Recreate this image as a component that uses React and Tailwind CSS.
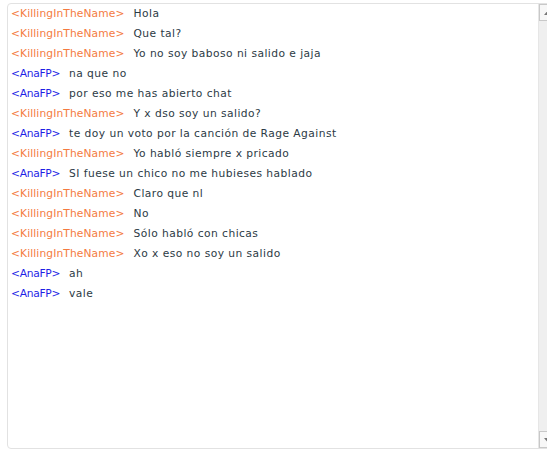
import React from "react";

const messages = [
  { user: "KillingInTheName", text: "Hola" },
  { user: "KillingInTheName", text: "Que tal?" },
  { user: "KillingInTheName", text: "Yo no soy baboso ni salido e jaja" },
  { user: "AnaFP", text: "na que no" },
  { user: "AnaFP", text: "por eso me has abierto chat" },
  { user: "KillingInTheName", text: "Y x dso soy un salido?" },
  { user: "AnaFP", text: "te doy un voto por la canción de Rage Against" },
  { user: "KillingInTheName", text: "Yo habló siempre x pricado" },
  { user: "AnaFP", text: "SI fuese un chico no me hubieses hablado" },
  { user: "KillingInTheName", text: "Claro que nl" },
  { user: "KillingInTheName", text: "No" },
  { user: "KillingInTheName", text: "Sólo habló con chicas" },
  { user: "KillingInTheName", text: "Xo x eso no soy un salido" },
  { user: "AnaFP", text: "ah" },
  { user: "AnaFP", text: "vale" },
];

const ChatLine = ({ user, text }) => {
  const isAna = user === "AnaFP";
  return (
    <div className="h-5 leading-5 whitespace-nowrap">
      <span
        className={
          isAna
            ? "text-[#1f1fe6] tracking-[-0.3px]"
            : "text-[#f47b41] tracking-[0.1px]"
        }
      >
        {`<${user}>`}
      </span>
      <span className="ml-[9px] text-[#2c3a45] tracking-[0.45px]">{text}</span>
    </div>
  );
};

const App = () => {
  return (
    <div className="w-[547px] h-[455px] overflow-hidden bg-white pt-[3px] pl-[7px]">
      <div className="w-[549px] h-[446px] flex border border-[#e2e2e2] rounded-[4px] bg-white">
        <div
          className="flex-1 pl-[3px] text-[10.7px]"
          style={{ fontFamily: '"DejaVu Sans", Verdana, sans-serif' }}
        >
          {messages.map((m, i) => (
            <ChatLine key={i} user={m.user} text={m.text} />
          ))}
        </div>

        {/* scrollbar */}
        <div className="w-[17px] flex flex-col bg-[#efefef] border-l border-[#e6e6e6]">
          <div className="h-[17px] flex items-center justify-center border border-[#c8c8c8] bg-[#f7f7f7]">
            <svg width="7" height="4" viewBox="0 0 7 4">
              <path d="M3.5 0 L7 4 L0 4 Z" fill="#777" />
            </svg>
          </div>
          <div className="flex-1" />
          <div className="h-[17px] flex items-center justify-center border border-[#c8c8c8] bg-[#f7f7f7]">
            <svg width="7" height="4" viewBox="0 0 7 4">
              <path d="M0 0 L7 0 L3.5 4 Z" fill="#777" />
            </svg>
          </div>
        </div>
      </div>
    </div>
  );
};

export default App;
